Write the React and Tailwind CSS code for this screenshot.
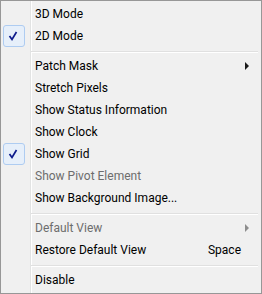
import React from "react";

const items = [
  { label: "3D Mode" },
  { label: "2D Mode", checked: true },
  { sep: true },
  { label: "Patch Mask", submenu: true },
  { label: "Stretch Pixels" },
  { label: "Show Status Information" },
  { label: "Show Clock" },
  { label: "Show Grid", checked: true },
  { label: "Show Pivot Element", disabled: true },
  { label: "Show Background Image..." },
  { sep: true },
  { label: "Default View", submenu: true, disabled: true },
  { label: "Restore Default View", shortcut: "Space" },
  { sep: true },
  { label: "Disable" },
];

function CheckBox() {
  return (
    <div className="w-[22px] h-[22px] rounded-[3px] border border-[#aeccf1] bg-[#e6effa] flex items-center justify-center">
      <svg width="20" height="20" viewBox="0 0 20 20">
        <polyline
          points="5.5,10 8,13.5 12.5,6"
          fill="none"
          stroke="#0d1b8c"
          strokeWidth="1.7"
        />
      </svg>
    </div>
  );
}

function MenuRow({ item }) {
  if (item.sep) {
    return (
      <div className="h-[8px] pl-[28px] pr-[1px] pt-[4px]">
        <div className="border-t border-[#e0e0e0]" />
        <div className="border-t border-white" />
      </div>
    );
  }
  return (
    <div
      className={`flex items-center h-[22px] ${
        item.disabled ? "text-[#6d6d6d]" : "text-black"
      }`}
    >
      <div className="w-[22px] h-[22px] shrink-0">
        {item.checked && <CheckBox />}
      </div>
      <span className="ml-[10px] whitespace-nowrap">{item.label}</span>
      {item.shortcut && (
        <span className="ml-auto mr-[18px]">{item.shortcut}</span>
      )}
      {item.submenu && (
        <svg
          className="ml-auto mr-[9px]"
          width="5"
          height="8"
          viewBox="0 0 5 8"
        >
          <polygon
            points="0,0 4,4 0,8"
            fill={item.disabled ? "#8d8d8d" : "#1a1a1a"}
          />
        </svg>
      )}
    </div>
  );
}

export default function App() {
  return (
    <div className="relative w-[262px] h-[294px] border border-[#979797] bg-[#f0f0f0] p-[2px] font-['Roboto',sans-serif] text-[12px] leading-none">
      <div className="absolute top-0 bottom-0 left-[29px] w-[2px] border-l border-[#e2e3e3] bg-white" />
      <div className="relative flex flex-col">
        {items.map((item, i) => (
          <MenuRow key={i} item={item} />
        ))}
      </div>
    </div>
  );
}
